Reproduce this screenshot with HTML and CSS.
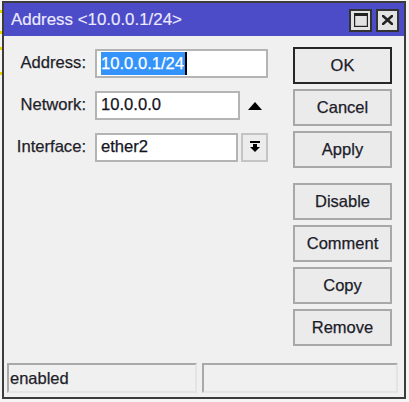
FILE: index.html
```html
<!DOCTYPE html>
<html>
<head>
<meta charset="utf-8">
<link rel="stylesheet" href="styles.css">
</head>
<body>
<div class="bgmarks"><i class="m1"></i><i class="m2"></i><i class="m3"></i><i class="m4"></i></div>
<div class="window">
  <div class="titlebar">
    <span class="title">Address &lt;10.0.0.1/24&gt;</span>
    <div class="tbtns">
      <span class="tbtn"><svg width="14" height="14" viewBox="0 0 14 14"><rect x="0.5" y="0.5" width="13" height="13" fill="none" stroke="#222" stroke-width="1.4"/><rect x="0" y="0" width="14" height="3" fill="#222"/></svg></span>
      <span class="tbtn"><svg width="11" height="10" viewBox="0 0 11 10"><path d="M1 1 L10 9 M10 1 L1 9" stroke="#222" stroke-width="2.6" stroke-linecap="square"/></svg></span>
    </div>
  </div>
  <div class="content">
    <div class="main">
      <div class="form">
        <label class="lbl">Address:</label>
        <div class="row"><div class="field w-addr"><span class="sel">10.0.0.1/24</span><span class="caret"></span></div></div>
        <label class="lbl">Network:</label>
        <div class="row"><div class="field w-net">10.0.0.0</div><span class="uparrow"><svg width="14" height="8" viewBox="0 0 14 8"><polygon points="7,0 14,8 0,8" fill="#000"/></svg></span></div>
        <label class="lbl">Interface:</label>
        <div class="row"><div class="field w-if">ether2</div><span class="ddbtn"><svg width="10" height="12" viewBox="0 0 10 12"><rect x="0" y="0" width="10" height="2" fill="#000"/><rect x="3" y="3" width="4" height="3" fill="#000"/><polygon points="0,6 10,6 5,11" fill="#000"/></svg></span></div>
      </div>
      <div class="buttons">
        <div class="group">
          <button class="btn default">OK</button>
          <button class="btn">Cancel</button>
          <button class="btn">Apply</button>
        </div>
        <div class="group">
          <button class="btn">Disable</button>
          <button class="btn">Comment</button>
          <button class="btn">Copy</button>
          <button class="btn">Remove</button>
        </div>
      </div>
    </div>
    <div class="status">
      <div class="panel p1">enabled</div>
      <div class="panel p2"></div>
    </div>
  </div>
</div>
</body>
</html>
```
FILE: styles.css
```css
html, body {
  margin: 0;
  padding: 0;
  background: #f4f4f4;
  width: 409px;
  height: 402px;
  overflow: hidden;
  font-family: "Liberation Sans", Arial, sans-serif;
}
.bgmarks {
  position: absolute;
  left: 0;
  top: 0;
  width: 2px;
  height: 402px;
}
.bgmarks i {
  position: absolute;
  left: 0;
  width: 2px;
  height: 3px;
  background: #e8d400;
}
.m1 { top: 10px; }
.m2 { top: 31px; }
.m3 { top: 47px; }
.m4 { top: 72px; }
.window {
  margin-left: 2px;
  margin-top: 1px;
  width: 400px;
  height: 394px;
  border: 2px solid #3c3c3c;
  background: #f0f0f0;
  display: flex;
  flex-direction: column;
}
.titlebar {
  height: 33px;
  background: #4c4cc9;
  display: flex;
  align-items: center;
  justify-content: space-between;
  padding: 0 5px 0 7px;
  flex: none;
}
.title {
  color: #eceaff;
  font-size: 16.9px;
  padding-top: 1px;
  -webkit-text-stroke: 0.15px #eceaff;
}
.tbtns {
  display: flex;
  gap: 4px;
  margin-top: 1px;
}
.tbtn {
  width: 19px;
  height: 19px;
  border: 2px solid #333;
  background: #e2e2e2;
  display: flex;
  align-items: center;
  justify-content: center;
}
.content {
  flex: 1;
  display: flex;
  flex-direction: column;
  justify-content: space-between;
}
.main {
  display: flex;
  justify-content: space-between;
  padding: 11px 12px 0 0;
}
.form {
  display: grid;
  grid-template-columns: 82px auto;
  column-gap: 9px;
  row-gap: 12px;
  padding-top: 1px;
  align-items: center;
  align-content: start;
}
.lbl, .field, .btn, .panel {
  -webkit-text-stroke: 0.25px currentColor;
}
.lbl {
  text-align: right;
  font-size: 16.6px;
  color: #1e1e2a;
}
.row {
  display: flex;
  align-items: center;
  height: 30px;
}
.field {
  box-sizing: border-box;
  height: 29px;
  background: #fff;
  border: 2px solid #b4b4b4;
  font-size: 16.6px;
  color: #14141e;
  padding: 0 0 0 4px;
  display: flex;
  align-items: center;
}
.w-addr { width: 173px; }
.w-net { width: 145px; }
.w-if { width: 143px; }
.sel {
  background: #3393fb;
  color: #fff;
  line-height: 23px;
  padding-right: 1px;
}
.caret {
  width: 2px;
  height: 23px;
  background: #000;
}
.uparrow {
  margin-left: 8px;
  display: flex;
  padding-top: 1px;
}
.ddbtn {
  box-sizing: border-box;
  margin-left: 3px;
  width: 27px;
  height: 29px;
  border: 2px solid #c4c4c4;
  background: #ececec;
  display: flex;
  align-items: center;
  justify-content: center;
}
.buttons {
  display: flex;
  flex-direction: column;
  gap: 15px;
}
.group {
  display: flex;
  flex-direction: column;
  gap: 5px;
}
.btn {
  box-sizing: border-box;
  width: 99px;
  height: 37px;
  border: 2px solid #a8a8a8;
  background: #ebebeb;
  font-family: "Liberation Sans", Arial, sans-serif;
  font-size: 16.5px;
  color: #1c1c2a;
  padding: 0;
}
.btn.default {
  border-color: #262626;
}
.status {
  display: flex;
  gap: 5px;
  padding: 0 6px 4px 3px;
}
.panel {
  box-sizing: border-box;
  height: 30px;
  border: 2px solid;
  border-color: #a9a9a9 #e4e4e4 #e4e4e4 #a9a9a9;
  font-size: 16.5px;
  color: #1e1e2a;
  display: flex;
  align-items: center;
  padding-left: 1px;
}
.p1 { width: 190px; }
.p2 { flex: 1; }
```
